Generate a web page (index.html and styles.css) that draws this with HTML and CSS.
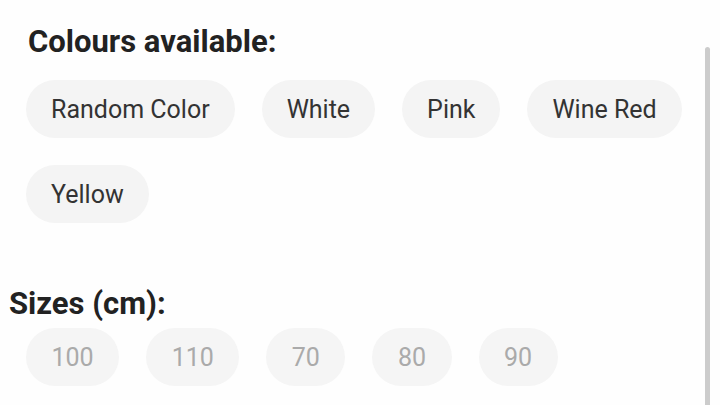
FILE: index.html
```html
<!DOCTYPE html>
<html>
<head>
<meta charset="utf-8">
<link rel="stylesheet" href="styles.css">
</head>
<body>
<div class="page">
  <section class="group colours">
    <h2 class="title">Colours available:</h2>
    <div class="chips">
      <span class="chip">Random Color</span>
      <span class="chip">White</span>
      <span class="chip">Pink</span>
      <span class="chip">Wine Red</span>
      <span class="chip">Yellow</span>
    </div>
  </section>
  <section class="group sizes">
    <h2 class="title">Sizes (cm):</h2>
    <div class="chips">
      <span class="chip disabled">100</span>
      <span class="chip disabled">110</span>
      <span class="chip disabled">70</span>
      <span class="chip disabled">80</span>
      <span class="chip disabled">90</span>
    </div>
  </section>
  <div class="scrollbar"></div>
</div>
</body>
</html>
```
FILE: styles.css
```css
html, body {
  margin: 0;
  padding: 0;
  background: #fefefe;
}
body {
  font-family: Roboto, "Noto Sans", sans-serif;
  width: 720px;
  height: 405px;
  overflow: hidden;
}
.page {
  position: relative;
  height: 405px;
  padding-top: 24px;
  box-sizing: border-box;
}
.title {
  margin: 0;
  font-size: 31px;
  line-height: 36px;
  font-weight: 700;
  color: #222;
}
.colours .title {
  margin-left: 28px;
  margin-bottom: 20px;
}
.sizes {
  margin-top: 63px;
}
.sizes .title {
  margin-left: 9px;
  margin-bottom: 6px;
}
.chips {
  display: flex;
  flex-wrap: wrap;
  gap: 27px 27px;
  padding-left: 26px;
  width: 670px;
}
.chip {
  height: 58px;
  line-height: 59px;
  padding: 0 25px;
  border-radius: 29px;
  background: #f4f4f4;
  color: #333;
  font-size: 25px;
}
.chip.disabled {
  padding: 0 25.5px;
  color: #aaa;
  background: #f5f5f5;
}
.scrollbar {
  position: absolute;
  left: 705px;
  top: 47px;
  width: 5px;
  bottom: 0;
  background: #cccccc;
  border-radius: 3px 3px 0 0;
}
```
